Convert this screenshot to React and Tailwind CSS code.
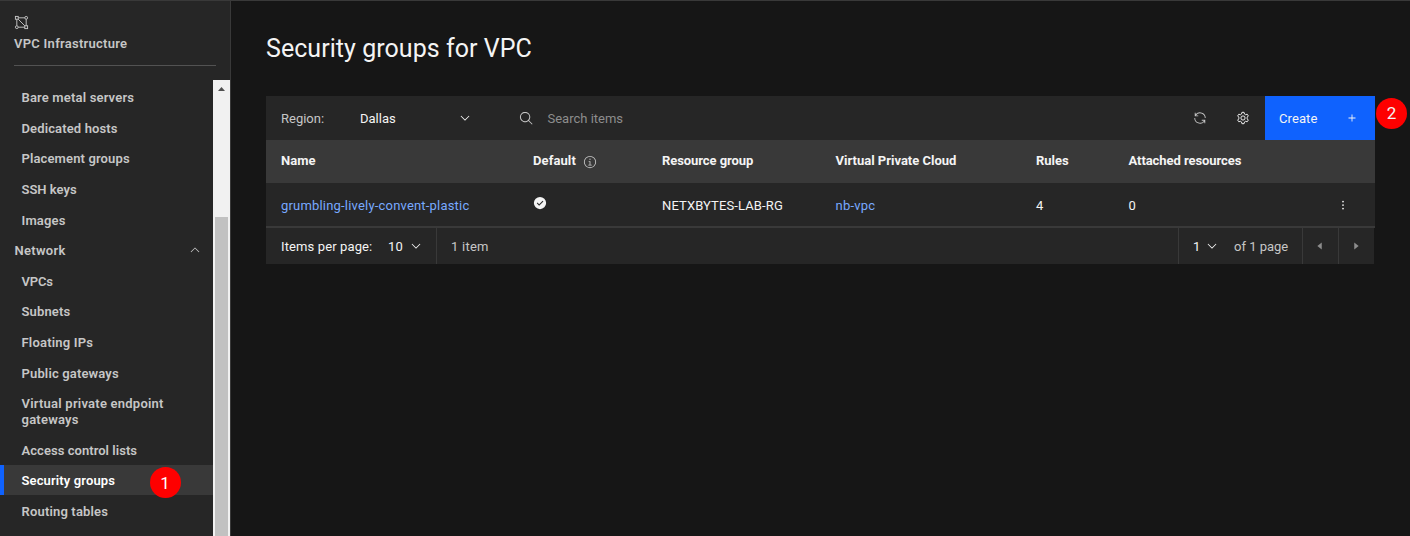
const P = ({ children, className, box = '0 0 32 32' }) => (
  <svg viewBox={box} className={`block shrink-0 ${className}`} fill="currentColor">{children}</svg>
);
const Chevron = ({ className }) => (
  <P box="0 0 16 16" className={className}><path d="M8 11L3 6 3.7 5.3 8 9.6 12.3 5.3 13 6z" /></P>
);

const before = [
  ['Bare metal servers', 'tracking-[0.17px]'],
  ['Dedicated hosts', 'tracking-[0.13px]'],
  ['Placement groups', 'tracking-[0.13px]'],
  ['SSH keys', 'tracking-[0px]'],
  ['Images', 'tracking-[0.15px]'],
];
const after = [
  ['VPCs', 'tracking-[-0.15px]'],
  ['Subnets', 'tracking-[0.15px]'],
  ['Floating IPs', 'tracking-[0.2px]'],
  ['Public gateways', 'tracking-[0.15px]'],
];

const Item = ({ label, track }) => (
  <li className="flex h-[30.6px] items-center pt-[2px] pl-[21.500px]"><span className={track}>{label}</span></li>
);

function Sidebar() {
  return (
    <aside className="flex w-[231px] shrink-0 flex-col border-r border-[#393939] bg-[#262626] text-[13px] font-semibold text-[#c6c6c6]">
      <header className="mx-[14px] h-[65px] border-b border-[#525252] pt-[14px]">
        <P className="size-[15px]">
          <g fill="none" stroke="currentColor" strokeWidth="2">
            <rect x="3" y="3" width="6" height="6" /><rect x="23" y="23" width="6" height="6" />
            <circle cx="26" cy="6" r="3" /><circle cx="6" cy="26" r="3" />
            <path d="M9 6H23M6 9V23M26 9V23M9 26H23M9 9L23 23" />
          </g>
        </P>
        <div className="mt-[5px] leading-[18px] tracking-[0.27px]"><span>VPC Infrastructure</span></div>
      </header>
      <div className="mt-[14px] flex min-h-0 flex-1">
        <ul className="w-[213px] pt-[2px] leading-4">
          {before.map(([l, t]) => <Item key={l} label={l} track={t} />)}
          <li className="flex h-[30.6px] items-center justify-between pr-[11px] pl-[14.500px]">
            <span className="pt-[2px] tracking-[0.3px]">Network</span><Chevron className="size-[14px] rotate-180" />
          </li>
          {after.map(([l, t]) => <Item key={l} label={l} track={t} />)}
          <li className="flex h-[46.6px] items-center pt-[2px] pl-[21.500px] tracking-[0.23px]">
            <span>Virtual private endpoint<br />gateways</span>
          </li>
          <Item label="Access control lists" track="tracking-[0.05px]" />
          <li className="mb-[0.6px] flex h-[30px] items-center border-l-4 border-[#0f62fe] bg-[#393939] pl-[17.500px] text-white">
            <span className="w-[128.500px] pt-[2px] tracking-[0.13px]">Security groups</span>
            <b className="mt-[5px] grid size-[31px] shrink-0 place-items-center rounded-full bg-[#fe0000] pr-px text-[17px] font-normal">1</b>
          </li>
          <Item label="Routing tables" track="tracking-[0.17px]" />
        </ul>
        <div className="w-[17px] bg-[#f1f1f1]">
          <div className="flex h-[137px] justify-center pt-[7px]">
            <svg className="h-1 w-[7px] fill-[#505050]" viewBox="0 0 7 4"><path d="M0 4L3.5 0 7 4z" /></svg>
          </div>
          <div className="mx-[2px] h-full max-h-[319px] bg-[#c1c1c1]" />
        </div>
      </div>
    </aside>
  );
}

const cols = 'grid grid-cols-[252px_129px_173.5px_200.5px_92.5px_1fr] items-center pl-[15px]';

export default function App() {
  return (
    <div className="flex h-[536px] w-[1410px] flex-col overflow-hidden border-t border-[#393939] bg-[#161616] font-[Roboto,sans-serif] text-[13px] text-[#f4f4f4]">
      <div className="flex min-h-0 flex-1">
        <Sidebar />
        <main className="flex-1 pl-[35px]">
          <h1 className="h-[95px] pt-[32px] text-[25px] leading-8 tracking-[0.05px]"><span>Security groups for VPC</span></h1>
          <div className="flex">
            <section className="w-[1109px]">
              <div className="flex h-[44px] items-center bg-[#262626] pl-[15px]">
                <span className="w-[79px] pt-[2px] text-[#c6c6c6]">Region:</span>
                <span className="w-[97.500px] pt-[2px]">Dallas</span>
                <Chevron className="size-[14px]" />
                <P className="ml-[47px] size-[15px] text-[#c6c6c6]"><path d="M29 27.586l-7.552-7.552a11.018 11.018 0 1 0-1.414 1.414L27.586 29ZM4 13a9 9 0 1 1 9 9 9.01 9.01 0 0 1-9-9Z" /></P>
                <span className="ml-[14px] flex-1 pt-[2px] text-[#8d8d8d]">Search items</span>
                <P className="mr-[29px] size-[14px] text-[#c6c6c6]"><path d="M12 10H6.78A11 11 0 0127 16h2A13 13 0 006 7.68V4H4v8h8zM20 22h5.22A11 11 0 015 16H3a13 13 0 0023 8.32V28h2V20H20z" /></P>
                <P box="0 0 16 16" className="mr-[15px] size-[14px]">
                  <g fill="none" stroke="currentColor" strokeWidth="1.100"><path d="M6.800 1.500h2.400l.5 2 1.400.8 1.600-.7 1.400 2-1.300 1.400v2l1.300 1.400-1.400 2-1.600-.7-1.400.8-.5 2H6.800l-.5-2-1.400-.8-1.600.7-1.400-2L3.200 9V7L1.900 5.600l1.400-2 1.600.7 1.400-.8z" /><circle cx="8" cy="8" r="2.400" /></g>
                </P>
                <button className="flex h-full w-[110px] items-center justify-between bg-[#0f62fe] pr-[16px] pl-[14px]">
                  <span className="pt-[2px] tracking-[0.1px]">Create</span>
                  <P className="size-[14px]"><path d="M17 15V8H15v7H8v2h7v7h2V17h7V15z" /></P>
                </button>
              </div>
              <div className={`${cols} h-[43px] bg-[#393939] pb-[2px] font-bold`}>
                <span>Name</span>
                <span className="flex items-center"><span className="w-[50px] tracking-[0.1px]">Default</span><P className="mt-[3px] size-[14px] text-[#c6c6c6]"><path d="M17 22V14H13v2h2v6H12v2h8V22zM16 8a1.500 1.500 0 101.500 1.500A1.500 1.500 0 0016 8z" /><path d="M16 30A14 14 0 1 1 30 16 14 14 0 0 1 16 30ZM16 4A12 12 0 1 0 28 16 12 12 0 0 0 16 4Z" /></P></span>
                <span className="tracking-[-0.07px]">Resource group</span><span>Virtual Private Cloud</span><span>Rules</span><span className="tracking-[-0.07px]">Attached resources</span>
              </div>
              <div className={`${cols} h-[45px] border-b-2 border-[#393939] bg-[#262626]`}>
                <span className="pt-[2px] tracking-[0.19px] text-[#78a9ff]">grumbling-lively-convent-plastic</span>
                <P box="0 0 16 16" className="-mt-[4px] size-[14px]"><path fillRule="evenodd" d="M8 1a7 7 0 1 0 0 14A7 7 0 0 0 8 1zM7 11L4.300 8.300l.9-.8L7 9.300l4-3.900.9.8z" /></P>
                <span className="pt-[3px] tracking-[0.12px]">NETXBYTES-LAB-RG</span>
                <span className="pt-[2px] tracking-[0.22px] text-[#78a9ff]">nb-vpc</span>
                <span className="pt-[2px]">4</span>
                <span className="flex items-center justify-between pr-[25.500px]"><span className="pt-[2px]">0</span><P className="size-[14px]"><circle cx="16" cy="8" r="2" /><circle cx="16" cy="16" r="2" /><circle cx="16" cy="24" r="2" /></P></span>
              </div>
              <div className="flex h-[36px] w-[1108px] items-center bg-[#262626] pl-[15px]">
                <span className="w-[107px] pt-[2px] tracking-[0.12px]">Items per page:</span>
                <span className="w-[21px] pt-[2px] tracking-[0.3px]">10</span><Chevron className="size-[14px]" />
                <span className="ml-[13px] flex h-full flex-1 items-center border-l border-[#393939] pt-[2px] pl-[14px] tracking-[0.25px] text-[#c6c6c6]">1 item</span>
                <div className="flex h-full w-[124px] items-center border-l border-[#393939] pl-[14px]">
                  <span className="w-[12px] pt-[2px]">1</span><Chevron className="size-[14px]" />
                  <span className="ml-[15px] pt-[2px] whitespace-nowrap text-[#c6c6c6]">of 1 page</span>
                </div>
                <div className="grid h-full w-[36px] place-items-center border-l border-[#393939] pr-[2px] text-[#8d8d8d]"><P className="size-[14px]"><path d="M20 24L10 16 20 8z" /></P></div>
                <div className="grid h-full w-[36px] place-items-center border-l border-[#393939] pr-[2px] text-[#8d8d8d]"><P className="size-[14px]"><path d="M12 8L22 16 12 24z" /></P></div>
              </div>
            </section>
            <b className="mt-[2px] ml-[1px] grid size-[31px] shrink-0 place-items-center rounded-full bg-[#fe0000] text-[17px] font-normal">2</b>
          </div>
        </main>
      </div>
    </div>
  );
}
